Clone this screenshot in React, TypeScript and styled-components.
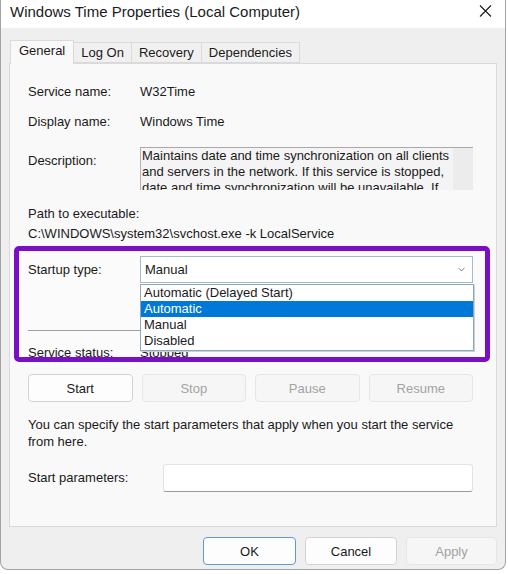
import React from 'react';
import styled, { createGlobalStyle } from 'styled-components';

const Global = createGlobalStyle`
  html, body { margin: 0; padding: 0; background: #ffffff; }
  body {
    font-family: 'Liberation Sans', Arial, sans-serif;
    font-size: 13px;
    color: #1a1a1a;
  }
  * { box-sizing: border-box; }
`;

const Window = styled.div`
  width: 506px;
  height: 570px;
  border: 1px solid #a3a3a3;
  border-top: none;
  border-radius: 0 0 8px 8px;
  background: #efefef;
  display: flex;
  flex-direction: column;
  overflow: hidden;
`;

const TitleBar = styled.div`
  height: 28px;
  flex: none;
  background: #ffffff;
  display: flex;
  align-items: center;
  justify-content: space-between;
  padding: 0 13px 6px 9px;
`;

const Title = styled.div`
  font-size: 15px;
  line-height: 17px;
  color: #1b1b1b;
`;

const CloseIcon = styled.svg`
  width: 13px;
  height: 12px;
  display: block;
`;

const Body = styled.div`
  flex: 1;
  display: flex;
  flex-direction: column;
  padding: 12px 8px 0 8px;
`;

const TabRow = styled.div`
  display: flex;
  align-items: flex-end;
  height: 23px;
  padding-left: 1px;
  position: relative;
  z-index: 1;
`;

const Tab = styled.div<{ $active?: boolean }>`
  height: ${(p) => (p.$active ? '24px' : '21px')};
  padding: 0 ${(p) => (p.$active ? '8px' : '7px')} ${(p) => (p.$active ? '4px' : '0')};
  display: flex;
  align-items: center;
  background: ${(p) => (p.$active ? '#f9f9f9' : '#f0f0f0')};
  border: 1px solid #dadada;
  border-bottom: ${(p) => (p.$active ? 'none' : '1px solid #dadada')};
  border-left: ${(p) => (p.$active ? '1px solid #dadada' : 'none')};
  margin-bottom: ${(p) => (p.$active ? '-1px' : '0')};
  color: #1a1a1a;
  white-space: nowrap;
`;

const Panel = styled.div`
  height: 464px;
  flex: none;
  background: #f9f9f9;
  border: 1px solid #dadada;
  padding: 0 23px 0 18px;
  display: flex;
  flex-direction: column;
`;

const InfoRow = styled.div<{ $top: number }>`
  display: grid;
  grid-template-columns: 112px 1fr;
  line-height: 16px;
  margin-top: ${(p) => p.$top}px;
  white-space: nowrap;
`;

const Label = styled.div<{ $offset?: number }>`
  line-height: 16px;
  margin-top: ${(p) => p.$offset ?? 0}px;
  white-space: nowrap;
`;

const DescBox = styled.div`
  height: 43px;
  border-top: 1px solid #a9a9a9;
  border-left: 1px solid #b4b4b4;
  background: #f4f4f4;
  display: flex;
  overflow: hidden;
`;

const DescText = styled.div`
  flex: 1;
  padding: 0 0 0 1px;
  line-height: 16px;
  white-space: nowrap;
`;

const ScrollTrack = styled.div`
  width: 20px;
  flex: none;
  background: #ececec;
`;

const TextLine = styled.div<{ $top?: number }>`
  line-height: 16px;
  margin-top: ${(p) => p.$top ?? 0}px;
  white-space: nowrap;
`;

const Highlight = styled.div`
  position: relative;
  margin: 4px -17px 0 -14px;
  height: 116px;
  flex: none;
  border: 5px solid #7a10c6;
  border-radius: 5px;
  padding: 5px 12px 0 9px;
  overflow: hidden;
  background: #fbfbfb;
`;

const SelectRow = styled.div`
  display: grid;
  grid-template-columns: 112px 1fr;
  align-items: center;
`;

const Select = styled.div`
  height: 27px;
  background: #ffffff;
  border: 1px solid #a4bccb;
  display: flex;
  align-items: center;
  justify-content: space-between;
  padding: 0 7px 0 4px;
`;

const Chevron = styled.svg`
  width: 7px;
  height: 5px;
  display: block;
`;

const Separator = styled.div`
  height: 1px;
  background: #a0a0a0;
  margin-top: 47px;
`;

const StatusRow = styled.div`
  display: grid;
  grid-template-columns: 112px 1fr;
  line-height: 16px;
  margin-top: 14px;
`;

const Dropdown = styled.div`
  position: absolute;
  top: 33px;
  left: 121px;
  width: 334px;
  height: 67px;
  background: #ffffff;
  border: 1px solid #8fa8b8;
  box-shadow: 1px 1px 0 #c6d0d6;
  display: flex;
  flex-direction: column;
`;

const Option = styled.div<{ $selected?: boolean }>`
  height: 16px;
  line-height: 16px;
  padding-left: 3px;
  background: ${(p) => (p.$selected ? '#0078d7' : 'transparent')};
  color: ${(p) => (p.$selected ? '#ffffff' : '#1a1a1a')};
  white-space: nowrap;
`;

const ButtonRow = styled.div`
  display: grid;
  grid-template-columns: repeat(4, 1fr);
  column-gap: 9px;
  margin-top: 12px;
`;

const Button = styled.div<{ $disabled?: boolean; $focus?: boolean; $w?: number }>`
  height: 28px;
  width: ${(p) => (p.$w ? `${p.$w}px` : 'auto')};
  border-radius: 4px;
  display: flex;
  align-items: center;
  justify-content: center;
  background: ${(p) => (p.$disabled ? '#f6f6f6' : '#fdfdfd')};
  border: 1px solid
    ${(p) => (p.$focus ? '#5b9ad6' : p.$disabled ? '#e6e6e6' : '#d3d3d3')};
  color: ${(p) => (p.$disabled ? '#a3a3a3' : '#1a1a1a')};
`;

const Paragraph = styled.div`
  margin-top: 14px;
  line-height: 17px;
  white-space: nowrap;
`;

const ParamRow = styled.div`
  display: grid;
  grid-template-columns: 135px 1fr;
  align-items: center;
  margin-top: 14px;
`;

const Input = styled.div`
  height: 28px;
  background: #ffffff;
  border: 1px solid #e3e3e3;
  border-bottom: 1px solid #9a9a9a;
  border-radius: 3px;
`;

const Footer = styled.div`
  display: flex;
  justify-content: flex-end;
  gap: 9px;
  padding-top: 10px;
`;

export default function App() {
  return (
    <>
      <Global />
      <Window>
        <TitleBar>
          <Title>Windows Time Properties (Local Computer)</Title>
          <CloseIcon viewBox="0 0 13 12">
            <path d="M1 0.5 L12 11.5 M12 0.5 L1 11.5" stroke="#1a1a1a" strokeWidth="1.1" fill="none" />
          </CloseIcon>
        </TitleBar>
        <Body>
          <TabRow>
            <Tab $active>General</Tab>
            <Tab>Log On</Tab>
            <Tab>Recovery</Tab>
            <Tab>Dependencies</Tab>
          </TabRow>
          <Panel>
            <InfoRow $top={20}>
              <Label>Service name:</Label>
              <div>W32Time</div>
            </InfoRow>
            <InfoRow $top={14}>
              <Label>Display name:</Label>
              <div>Windows Time</div>
            </InfoRow>
            <InfoRow $top={17}>
              <Label $offset={6}>Description:</Label>
              <DescBox>
                <DescText>
                  <div>Maintains date and time synchronization on all clients</div>
                  <div>and servers in the network. If this service is stopped,</div>
                  <div>date and time synchronization will be unavailable. If</div>
                </DescText>
                <ScrollTrack />
              </DescBox>
            </InfoRow>
            <TextLine $top={16}>Path to executable:</TextLine>
            <TextLine $top={4}>C:\WINDOWS\system32\svchost.exe -k LocalService</TextLine>
            <Highlight>
              <SelectRow>
                <Label>Startup type:</Label>
                <Select>
                  <span>Manual</span>
                  <Chevron viewBox="0 0 7 5">
                    <path d="M0.5 0.8 L3.5 4 L6.5 0.8" stroke="#7a7a7a" strokeWidth="0.9" fill="none" />
                  </Chevron>
                </Select>
              </SelectRow>
              <Separator />
              <StatusRow>
                <Label>Service status:</Label>
                <div>Stopped</div>
              </StatusRow>
              <Dropdown>
                <Option>Automatic (Delayed Start)</Option>
                <Option $selected>Automatic</Option>
                <Option>Manual</Option>
                <Option>Disabled</Option>
              </Dropdown>
            </Highlight>
            <ButtonRow>
              <Button>Start</Button>
              <Button $disabled>Stop</Button>
              <Button $disabled>Pause</Button>
              <Button $disabled>Resume</Button>
            </ButtonRow>
            <Paragraph>
              <div>You can specify the start parameters that apply when you start the service</div>
              <div>from here.</div>
            </Paragraph>
            <ParamRow>
              <Label>Start parameters:</Label>
              <Input />
            </ParamRow>
          </Panel>
          <Footer>
            <Button $focus $w={93}>OK</Button>
            <Button $w={92}>Cancel</Button>
            <Button $disabled $w={91}>Apply</Button>
          </Footer>
        </Body>
      </Window>
    </>
  );
}
